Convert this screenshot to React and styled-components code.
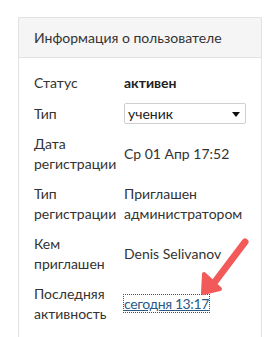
import React from "react";
import styled, { createGlobalStyle } from "styled-components";

const GlobalStyle = createGlobalStyle`
	html, body {
		margin: 0;
		padding: 0;
		background: #fff;
	}
	body {
		font-family: Lato, "Liberation Sans", sans-serif;
		color: #333;
	}
`;

const rows = [
	{ label: ["Статус"], value: "активен", kind: "bold" },
	{ label: ["Тип"], value: "ученик", kind: "select" },
	{ label: ["Дата", "регистрации"], value: "Ср 01 Апр 17:52" },
	{ label: ["Тип", "регистрации"], value: ["Приглашен", "администратором"] },
	{ label: ["Кем", "приглашен"], value: "Denis Selivanov" },
	{ label: ["Последняя", "активность"], value: "сегодня 13:17", kind: "link" },
];

function App() {
	return (
		<>
			<GlobalStyle />
			<Page>
				<Panel>
					<PanelHeader>Информация о пользователе</PanelHeader>
					<PanelBody>
						{rows.map((row, i) => (
							<Row key={i}>
								<Label>
									{row.label.map((l) => (
										<div key={l}>{l}</div>
									))}
								</Label>
								<Value>
									{row.kind === "bold" && <Bold>{row.value}</Bold>}
									{row.kind === "select" && (
										<Select>
											{row.value}
											<Caret />
										</Select>
									)}
									{row.kind === "link" && <Link href="#">{row.value}</Link>}
									{!row.kind &&
										(Array.isArray(row.value)
											? row.value.map((v) => <div key={v}>{v}</div>)
											: row.value)}
								</Value>
							</Row>
						))}
					</PanelBody>
				</Panel>
				{/* annotation arrow drawn over the panel */}
				<Arrow viewBox="0 0 60 70" width="60" height="70">
					<line x1="48" y1="7" x2="14" y2="52" stroke="#f25a5a" strokeWidth="7" strokeLinecap="round" />
					<path d="M6 58 L7 39 L23 54 Z" fill="#f25a5a" stroke="#f25a5a" strokeWidth="4" strokeLinejoin="round" />
				</Arrow>
			</Page>
		</>
	);
}

export default App;

const Page = styled.div`
	position: relative;
	width: 275px;
	height: 337px;
	overflow: hidden;
	padding: 17px 0 0 18px;
	box-sizing: border-box;
`;

const Panel = styled.div`
	width: 244px;
	border: 1px solid #e2e2e2;
	box-sizing: border-box;
	height: 340px;
`;

const PanelHeader = styled.div`
	height: 39px;
	line-height: 39px;
	background: #f5f5f5;
	border-bottom: 1px solid #e2e2e2;
	padding-left: 15px;
	font-size: 14px;
	color: #333;
`;

const PanelBody = styled.div`
	padding: 15px 15px 0 15px;
	display: flex;
	flex-direction: column;
	gap: 10px;
`;

const Row = styled.div`
	display: grid;
	grid-template-columns: 90px 1fr;
	align-items: center;
	font-size: 14px;
	line-height: 20px;
`;

const Label = styled.div`
	color: #333;
`;

const Value = styled.div`
	color: #333;
`;

const Bold = styled.span`
	font-weight: 700;
	color: #222;
`;

const Select = styled.div`
	position: relative;
	height: 21px;
	line-height: 19px;
	box-sizing: border-box;
	border: 1px solid #cfcfcf;
	border-radius: 2px;
	padding-left: 3px;
	background: #fff;
	color: #222;
`;

const Caret = styled.span`
	position: absolute;
	right: 5px;
	top: 8px;
	width: 0;
	height: 0;
	border-left: 4px solid transparent;
	border-right: 4px solid transparent;
	border-top: 5px solid #111;
`;

const Link = styled.a`
	color: #2b5a87;
	text-decoration: underline;
	outline: 1px dotted #2b5a87;
	letter-spacing: -0.4px;
`;

const Arrow = styled.svg`
	position: absolute;
	left: 197px;
	top: 235px;
`;
